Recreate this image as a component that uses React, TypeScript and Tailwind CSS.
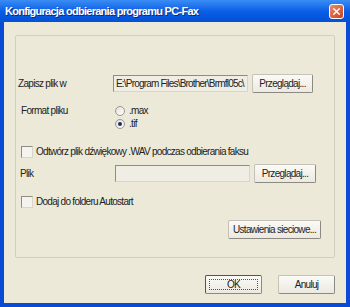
import { X } from 'lucide-react';

const savePath = 'E:\\Program Files\\Brother\\Brmfl05c\\';

function Button({ label, w, isDefault }: { label: string; w: string; isDefault?: boolean }) {
    return (
        <div
            className={`${w} h-[19px] flex items-center justify-center rounded-[2px] bg-linear-to-b from-[#fbfaf6] to-[#ebe9e0] border ${isDefault ? 'border-[#555550]' : 'border-[#c4c2b8]'} border-r-[#8c8a80] border-b-[#8c8a80] text-[10px] tracking-[-0.7px] text-[#222]`}
        >
            {isDefault ? (
                <div className="w-[calc(100%-6px)] h-[calc(100%-6px)] border border-dotted border-[#555] flex items-center justify-center">
                    {label}
                </div>
            ) : (
                label
            )}
        </div>
    );
}

function Field({ value }: { value?: string }) {
    return (
        <div className="w-[135px] h-[17px] border border-[#8e8c84] border-r-[#d8d6ca] border-b-[#d8d6ca] bg-[#f0eee4] flex items-center px-[2px] overflow-hidden whitespace-nowrap text-[10px] tracking-[-0.8px] text-[#222]">
            {value}
        </div>
    );
}

function Radio({ label, checked }: { label: string; checked?: boolean }) {
    return (
        <div className="flex items-center h-[13px]">
            <div className="w-[10px] h-[10px] rounded-full border border-[#9a988e] bg-linear-to-br from-[#e2e0d6] to-white flex items-center justify-center">
                {checked && <div className="w-[4px] h-[4px] rounded-full bg-[#1d2f6a]" />}
            </div>
            <span className="ml-[4px] text-[10px] tracking-[-0.7px] text-[#222]">{label}</span>
        </div>
    );
}

function Check({ label }: { label: string }) {
    return (
        <div className="flex items-center h-[13px] ml-[5px]">
            <div className="w-[12px] h-[12px] border border-[#8e8c84] border-r-[#d8d6ca] border-b-[#d8d6ca] bg-[#f4f3ee]" />
            <span className="ml-[3px] text-[10px] tracking-[-0.72px] text-[#222]">{label}</span>
        </div>
    );
}

export default function App() {
    return (
        <div className="w-[350px] h-[307px] flex flex-col bg-[#0a4bd6] [print-color-adjust:exact] [-webkit-print-color-adjust:exact] forced-color-adjust-none font-['Liberation_Sans',Arial,sans-serif]">
            <div className="h-[22px] shrink-0 flex items-center justify-between pl-[5px] pr-[6px] bg-linear-to-b from-[#3a8cf5] via-[#0a5fe6] to-[#0350d6]">
                <span className="text-white font-bold text-[11px] tracking-[-0.72px] [text-shadow:1px_1px_0_#0a2a80]">
                    Konfiguracja odbierania programu PC-Fax
                </span>
                <div className="w-[15px] h-[15px] rounded-[3px] border border-white bg-linear-to-br from-[#ec8a6a] to-[#c8401e] flex items-center justify-center">
                    <X size={11} strokeWidth={3} color="white" />
                </div>
            </div>
            <div className="flex-1 px-[4px] pb-[4px] flex flex-col">
                <div className="flex-1 flex flex-col bg-[#ece9d8]">
                    <div className="ml-[11px] mt-[13px] w-[320px] h-[223px] border border-[#d0d0bf] rounded-[2px] flex flex-col">
                        <div className="mt-[38px] flex items-center h-[19px]">
                            <span className="w-[97px] pl-[2px] text-[10px] tracking-[-0.7px] text-[#222]">Zapisz plik w</span>
                            <Field value={savePath} />
                            <div className="ml-[4px]">
                                <Button label="Przeglądaj..." w="w-[61px]" />
                            </div>
                        </div>
                        <div className="mt-[11px] flex">
                            <span className="w-[99px] pl-[5px] text-[10px] tracking-[-0.7px] text-[#222] leading-[13px]">Format pliku</span>
                            <div className="flex flex-col">
                                <Radio label=".max" />
                                <Radio label=".tif" checked />
                            </div>
                        </div>
                        <div className="mt-[15px]">
                            <Check label="Odtwórz plik dźwiękowy .WAV podczas odbierania faksu" />
                        </div>
                        <div className="mt-[7px] flex items-center h-[17px]">
                            <span className="w-[99px] pl-[4px] text-[10px] tracking-[-0.7px] text-[#222]">Plik</span>
                            <Field />
                            <div className="ml-[4px]">
                                <Button label="Przeglądaj..." w="w-[62px]" />
                            </div>
                        </div>
                        <div className="mt-[13px]">
                            <Check label="Dodaj do folderu Autostart" />
                        </div>
                        <div className="mt-[12px] flex justify-end pr-[13px]">
                            <Button label="Ustawienia sieciowe..." w="w-[93px]" />
                        </div>
                    </div>
                    <div className="mt-[17px] flex justify-end gap-[16px] pr-[11px]">
                        <Button label="OK" w="w-[57px]" isDefault />
                        <Button label="Anuluj" w="w-[57px]" />
                    </div>
                </div>
            </div>
        </div>
    );
}
